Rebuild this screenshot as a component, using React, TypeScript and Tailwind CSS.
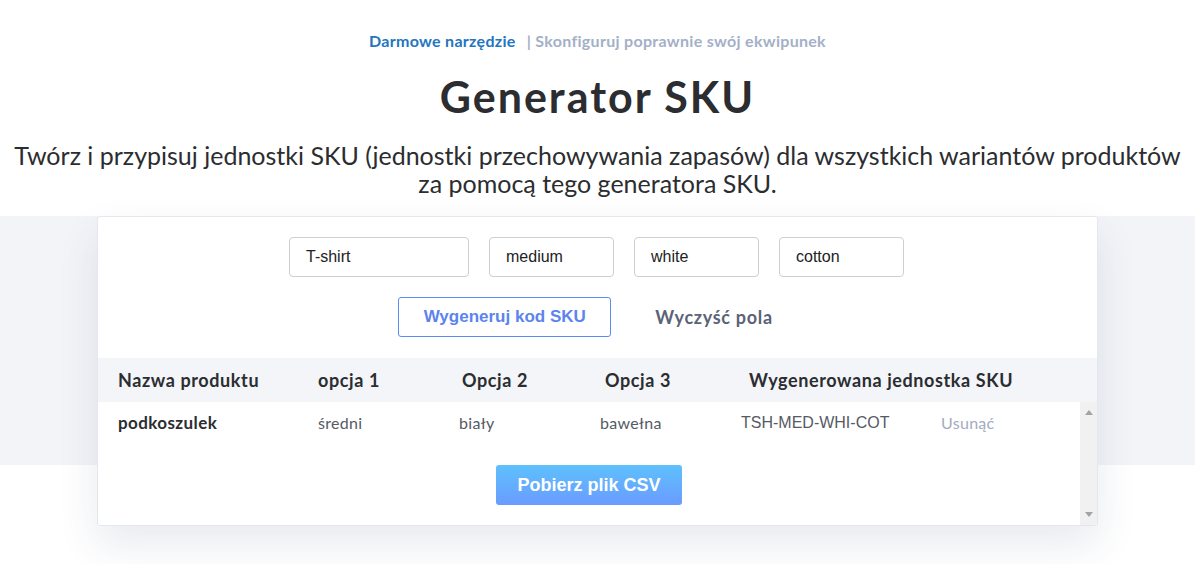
export default function App() {
  const headers = [
    { label: "Nazwa produktu", w: "w-[200px]" },
    { label: "opcja 1", w: "w-[144px]" },
    { label: "Opcja 2", w: "w-[143px]" },
    { label: "Opcja 3", w: "w-[144px]" },
    { label: "Wygenerowana jednostka SKU", w: "" },
  ];

  return (
    <div className="min-h-[564px] bg-white font-['Lato','Noto_Sans',sans-serif] text-[#2b2d30]">
      {/* hero */}
      <div className="flex flex-col items-center pt-[31px] pb-[19px]">
        <div className="text-[16px] leading-5 font-bold tracking-[0.3px]">
          <span className="text-[#2375c0]">Darmowe narzędzie</span>
          <span className="ml-[11px] text-[#a4b0c7]">| Skonfiguruj poprawnie swój ekwipunek</span>
        </div>
        <h1 className="mt-[22px] text-[43px] leading-[48px] font-bold tracking-[2px] text-[#2b2d30]">Generator SKU</h1>
        <p className="mt-[20px] text-center text-[25px] leading-[28px] text-[#2b2d30] whitespace-nowrap">
          Twórz i przypisuj jednostki SKU (jednostki przechowywania zapasów) dla wszystkich wariantów produktów
          <br />
          za pomocą tego generatora SKU.
        </p>
      </div>

      {/* tool */}
      <div className="bg-[linear-gradient(to_bottom,#f3f4f8_249px,#ffffff_249px)] pb-[40px]">
        <div className="mx-auto w-[1001px] rounded-[3px] border border-[#e4e8ee] bg-white shadow-[0_18px_40px_rgba(40,60,100,0.11)]">
          <div className="pt-[20px] pb-[21px]">
            <div className="flex justify-center gap-5 pr-[2px] font-['Liberation_Sans',Arial,sans-serif] text-[16px] text-[#222]">
              <div className="flex h-10 w-[180px] items-center rounded-[4px] border border-[#cfcfcf] pl-4">T-shirt</div>
              <div className="flex h-10 w-[125px] items-center rounded-[4px] border border-[#cfcfcf] pl-4">medium</div>
              <div className="flex h-10 w-[125px] items-center rounded-[4px] border border-[#cfcfcf] pl-4">white</div>
              <div className="flex h-10 w-[125px] items-center rounded-[4px] border border-[#cfcfcf] pl-4">cotton</div>
            </div>
            <div className="mt-5 flex justify-center gap-6 pr-[4px]">
              <button className="h-10 w-[213px] rounded-[3px] border border-[#5b8cf5] bg-white font-['Liberation_Sans',Arial,sans-serif] text-[17px] font-bold text-[#5b84ef]">
                Wygeneruj kod SKU
              </button>
              <button className="h-10 px-5 text-[18px] font-bold tracking-[0.7px] text-[#5b6377]">Wyczyść pola</button>
            </div>
          </div>

          <div className="flex h-[44px] items-center bg-[#f3f5f9] pl-[20px] text-[18px] font-bold tracking-[0.6px] text-[#2b2d30]">
            {headers.map((h) => (
              <div key={h.label} className={h.w}>
                {h.label}
              </div>
            ))}
          </div>

          <div className="flex h-[123px]">
            <div className="flex-1">
              <div className="flex items-center pt-[11px] pb-[10px] pl-[20px] text-[16px] leading-5 tracking-[0.3px] text-[#555a63]">
                <div className="w-[200px] text-[17px] font-bold tracking-[0.4px] text-[#2b2d30]">podkoszulek</div>
                <div className="w-[141px]">średni</div>
                <div className="w-[141px]">biały</div>
                <div className="w-[141px]">bawełna</div>
                <div className="w-[200px] font-['Liberation_Sans',Arial,sans-serif] tracking-normal">TSH-MED-WHI-COT</div>
                <div className="text-[#a3abc2]">Usunąć</div>
              </div>
              <div className="flex justify-center pt-[22px]">
                <button className="h-10 w-[186px] rounded-[3px] bg-[linear-gradient(to_bottom,#5ec1fd,#6a9bff)] font-['Liberation_Sans',Arial,sans-serif] text-[18px] font-bold text-white">
                  Pobierz plik CSV
                </button>
              </div>
            </div>
            {/* scrollbar */}
            <div className="flex w-[17px] flex-col items-center justify-between bg-[#f1f1f1] py-[8px]">
              <svg width="8" height="5" viewBox="0 0 8 5">
                <path d="M4 0 L8 5 L0 5 Z" fill="#a3a3a3" />
              </svg>
              <svg width="8" height="5" viewBox="0 0 8 5">
                <path d="M0 0 L8 0 L4 5 Z" fill="#a3a3a3" />
              </svg>
            </div>
          </div>
        </div>
      </div>
    </div>
  );
}
